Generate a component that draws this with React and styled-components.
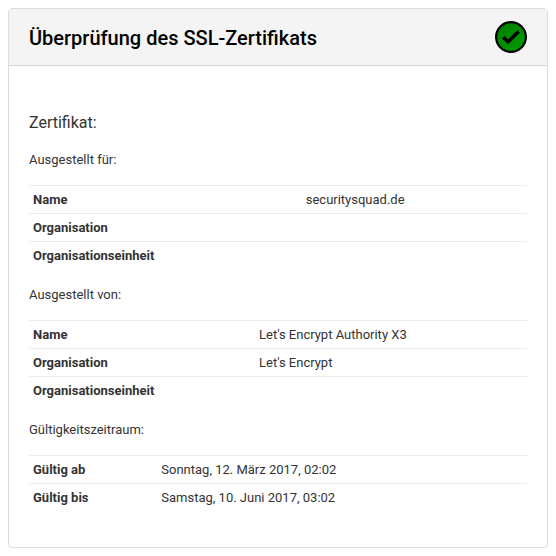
import React from "react";
import styled, { createGlobalStyle } from "styled-components";

const GlobalStyle = createGlobalStyle`
  *, *::before, *::after { box-sizing: border-box; }
  body {
    margin: 8px;
    background: #fff;
    color: #333;
    font: 13px/19px Roboto, "Liberation Sans", sans-serif;
  }
`;

const Card = styled.section`
  border: 1px solid #ddd;
  border-radius: 4px;
  overflow: hidden;
  background: #fff;
`;

const CardHeader = styled.header`
  display: flex;
  align-items: center;
  justify-content: space-between;
  padding: 12px 20px;
  background: #f4f4f4;
  border-bottom: 1px solid #d6d6d6;
`;

const Title = styled.h1`
  margin: 0;
  padding-top: 2px;
  color: #000;
  font-size: 20px;
  line-height: 30px;
  font-weight: 500;
`;

const StatusIcon = styled.svg`
  display: block;
  width: 32px;
  height: 32px;
`;

const CardBody = styled.div`
  padding: 46px 20px 36px;
`;

const SectionTitle = styled.h2`
  margin: 0;
  font-size: 16px;
  line-height: 22px;
  font-weight: 400;
`;

const Details = styled.table`
  width: 100%;
  border-collapse: separate;
  border-spacing: 0;

  caption {
    padding: 16px 0;
    text-align: left;
  }

  th,
  td {
    padding: 4px;
    border-top: 1px solid #ececec;
    text-align: left;
    vertical-align: top;
    height: 28px;
  }

  th {
    font-weight: 700;
  }
`;

const groups = [
  {
    label: "Ausgestellt für:",
    rows: [
      ["Name", "securitysquad.de"],
      ["Organisation", ""],
      ["Organisationseinheit", ""],
    ],
  },
  {
    label: "Ausgestellt von:",
    rows: [
      ["Name", "Let's Encrypt Authority X3"],
      ["Organisation", "Let's Encrypt"],
      ["Organisationseinheit", ""],
    ],
  },
  {
    label: "Gültigkeitszeitraum:",
    rows: [
      ["Gültig ab", "Sonntag, 12. März 2017, 02:02"],
      ["Gültig bis", "Samstag, 10. Juni 2017, 03:02"],
    ],
  },
];

function ValidIcon() {
  return (
    <StatusIcon viewBox="0 0 32 32" aria-hidden="true">
      <defs>
        <linearGradient id="valid-fill" x1="0" y1="0" x2="1" y2="1">
          <stop offset="0" stopColor="#007a00" />
          <stop offset="1" stopColor="#00a000" />
        </linearGradient>
      </defs>
      <circle cx="16" cy="16" r="14.9" fill="url(#valid-fill)" stroke="#000" strokeWidth="2.2" />
      <path d="M7 17.4 9.7 14.9 13.2 18.2 22.5 9 25 11.4 13.2 23.3Z" fill="#000" />
    </StatusIcon>
  );
}

export default function App() {
  return (
    <>
      <GlobalStyle />
      <Card>
        <CardHeader>
          <Title>Überprüfung des SSL-Zertifikats</Title>
          <ValidIcon />
        </CardHeader>
        <CardBody>
          <SectionTitle>Zertifikat:</SectionTitle>
          {groups.map((group) => (
            <Details key={group.label}>
              <caption>{group.label}</caption>
              <tbody>
                {group.rows.map(([name, value]) => (
                  <tr key={name}>
                    <th scope="row">{name}</th>
                    <td>{value}</td>
                  </tr>
                ))}
              </tbody>
            </Details>
          ))}
        </CardBody>
      </Card>
    </>
  );
}
